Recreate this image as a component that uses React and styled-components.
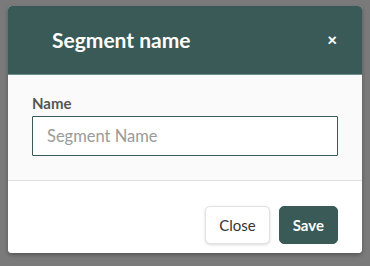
import styled, { createGlobalStyle } from 'styled-components'

const TEAL = '#3a5a57'

const GlobalStyle = createGlobalStyle`
  html, body {
    margin: 0;
    padding: 0;
    background: #7a7a7a;
    font-family: Lato, "Open Sans", sans-serif;
  }
  * { box-sizing: border-box; }
`

const Backdrop = styled.div`
  width: 370px;
  height: 266px;
  padding: 6px 8px 0 8px;
  background: #7a7a7a;
`

const Modal = styled.div`
  width: 354px;
  height: 247px;
  border-radius: 4px;
  overflow: hidden;
  background: #fff;
  display: flex;
  flex-direction: column;
  box-shadow: 0 2px 4px rgba(0, 0, 0, 0.3);
`

const Header = styled.div`
  height: 69px;
  flex: none;
  display: flex;
  align-items: center;
  justify-content: space-between;
  padding: 0 25px 2px 44px;
  background: ${TEAL};
  border-bottom: 1px solid #6f8f8b;
`

const Title = styled.h4`
  margin: 0;
  font-size: 21px;
  font-weight: 700;
  color: #fff;
`

const CloseX = styled.button`
  border: 0;
  padding: 0;
  background: none;
  color: #fff;
  font-family: inherit;
  font-size: 17px;
  font-weight: 900;
  line-height: 1;
  cursor: pointer;
`

const Body = styled.div`
  height: 106px;
  flex: none;
  padding: 19px 24px 0 24px;
  background: #fafafa;
  border-bottom: 1px solid #dedede;
`

const Label = styled.label`
  display: block;
  font-size: 15px;
  font-weight: 700;
  color: #555;
  line-height: 18px;
  margin-bottom: 4px;
`

const Input = styled.input`
  display: block;
  width: 306px;
  height: 40px;
  padding: 0 14px;
  border: 1.5px solid ${TEAL};
  border-radius: 1px;
  background: #fff;
  font-family: inherit;
  font-size: 16.5px;
  color: #333;
  outline: none;
  caret-color: #333;
  &::placeholder { color: #9a9a9a; }
`

const Footer = styled.div`
  flex: 1;
  display: flex;
  justify-content: flex-end;
  align-items: flex-start;
  gap: 9px;
  padding: 25px 24px 0 24px;
  background: #fff;
`

const Button = styled.button`
  height: 38px;
  padding: 0 13px;
  border-radius: 5px;
  font-family: inherit;
  font-size: 15px;
  font-weight: ${({ primary }) => (primary ? 700 : 400)};
  color: ${({ primary }) => (primary ? '#fff' : '#333')};
  background: ${({ primary }) => (primary ? TEAL : '#fff')};
  border: 1px solid ${({ primary }) => (primary ? TEAL : '#e2e2e2')};
  box-shadow: ${({ primary }) => (primary ? 'none' : '0 1px 3px rgba(0,0,0,0.15)')};
  cursor: pointer;
`

export default function App() {
  return (
    <>
      <GlobalStyle />
      <Backdrop>
        <Modal>
          <Header>
            <Title>Segment name</Title>
            <CloseX aria-label="Close">×</CloseX>
          </Header>
          <Body>
            <Label htmlFor="segment-name">Name</Label>
            <Input id="segment-name" placeholder="Segment Name" autoFocus />
          </Body>
          <Footer>
            <Button>Close</Button>
            <Button primary>Save</Button>
          </Footer>
        </Modal>
      </Backdrop>
    </>
  )
}
